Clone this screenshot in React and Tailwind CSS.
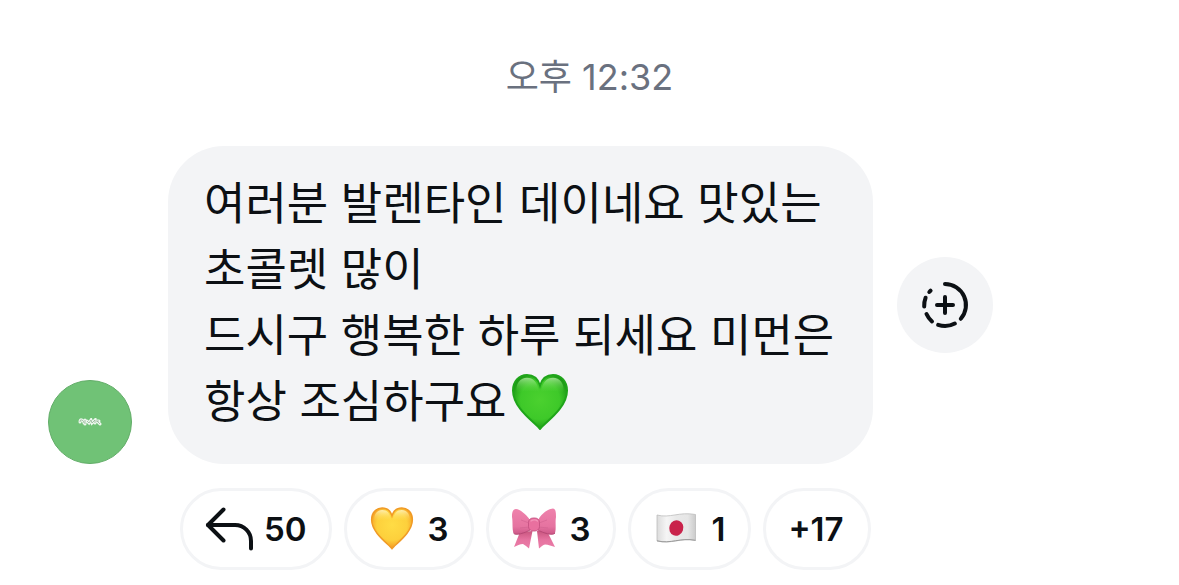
import React from 'react';

// ─── Data ────────────────────────────────────────────────────────────────────
const MESSAGE_LINES = [
  '여러분 발렌타인 데이네요 맛있는',
  '초콜렛 많이',
  '드시구 행복한 하루 되세요 미먼은',
];
const LAST_LINE = '항상 조심하구요';

// ─── Icons ───────────────────────────────────────────────────────────────────
const HEART_PATH =
  'M29 57 C25 51 1 36 1 17 C1 8 7 1 15.500 1 C22 1 27 5 29 12 C31 5 36 1 42.500 1 C51 1 57 8 57 17 C57 36 33 51 29 57 Z';

function GreenHeart() {
  return (
    <svg viewBox="0 0 58 58" className="h-14 w-14 shrink-0" role="img" aria-label="초록 하트">
      <defs>
        <radialGradient id="greenFill" cx="50%" cy="46%" r="60%">
          <stop offset="0" stopColor="#4bd12f" />
          <stop offset="0.6" stopColor="#3ec929" />
          <stop offset="1" stopColor="#128a10" />
        </radialGradient>
        <linearGradient id="greenShine" x1="0" y1="0" x2="0" y2="1">
          <stop offset="0" stopColor="#b9efaa" stopOpacity="0.75" />
          <stop offset="1" stopColor="#4bd12f" stopOpacity="0" />
        </linearGradient>
      </defs>
      <path d={HEART_PATH} fill="url(#greenFill)" />
      <path d="M5 20C3 10 9 4 15.500 4C22 4 26 8 28 18C20 17 12 17 5 20Z" fill="url(#greenShine)" />
      <path d="M53 20C55 10 49 4 42.500 4C36 4 32 8 30 18C38 17 46 17 53 20Z" fill="url(#greenShine)" />
      <path d={HEART_PATH} fill="none" stroke="#1fa51a" strokeWidth="2" />
    </svg>
  );
}

function YellowHeart() {
  return (
    <svg viewBox="-4 -3 66 66" className="h-12 w-12 shrink-0" role="img" aria-label="노란 하트">
      <defs>
        <radialGradient id="yellowFill" cx="50%" cy="42%" r="62%">
          <stop offset="0" stopColor="#ffdc45" />
          <stop offset="0.6" stopColor="#fdd03c" />
          <stop offset="1" stopColor="#f28c1b" />
        </radialGradient>
        <linearGradient id="yellowShine" x1="0" y1="0" x2="0" y2="1">
          <stop offset="0" stopColor="#fff6c2" stopOpacity="0.85" />
          <stop offset="1" stopColor="#ffdc45" stopOpacity="0" />
        </linearGradient>
      </defs>
      <path d={HEART_PATH} fill="url(#yellowFill)" />
      <path d="M5 20C3 10 9 4 15.500 4C22 4 26 8 28 18C20 17 12 17 5 20Z" fill="url(#yellowShine)" />
      <path d="M53 20C55 10 49 4 42.500 4C36 4 32 8 30 18C38 17 46 17 53 20Z" fill="url(#yellowShine)" />
      <path d={HEART_PATH} fill="none" stroke="#f09a25" strokeWidth="2" />
    </svg>
  );
}

function Ribbon() {
  return (
    <svg viewBox="0 0 48 48" className="h-12 w-12 shrink-0" role="img" aria-label="리본">
      <defs>
        <linearGradient id="loop" x1="0" y1="0" x2="0" y2="1">
          <stop offset="0" stopColor="#ef82ac" />
          <stop offset="0.7" stopColor="#e573a0" />
          <stop offset="1" stopColor="#cc5787" />
        </linearGradient>
        <linearGradient id="tail" x1="0" y1="0" x2="0" y2="1">
          <stop offset="0" stopColor="#c9557f" />
          <stop offset="0.5" stopColor="#e673a0" />
          <stop offset="1" stopColor="#ea7da8" />
        </linearGradient>
      </defs>
      <path d="M10 27L4 42C7 40.500 10 39 13 39C15 40 17 42 19 43.500L22.500 26Z" fill="url(#tail)" />
      <path d="M27 26L29 43.500C31 42 33 39.500 35 39.500C38 39.500 42 41 45 42L37 26Z" fill="url(#tail)" />
      <path d="M20 15C16 9 10 4.500 6 4C2.500 4 2 8 2 12C3 17 2 24 3.500 28C5 31 15 28 20 25Z" fill="url(#loop)" />
      <path d="M28 15C32 8 38 4 43 3.500C46 4 46 8 46 12C45 17 46.500 24 45 28C43 31 33 28 28 25Z" fill="url(#loop)" />
      <path d="M3.500 28C5 31 15 28 20 25M45 28C43 31 33 28 28 25" stroke="#b84976" strokeWidth="1" fill="none" />
      <path d="M19 18L11 15M19 22L10 23M29 18L37 15M29 22L38 23" stroke="#d0608f" strokeOpacity="0.6" strokeWidth="1" fill="none" />
      <rect x="18.500" y="13" width="11" height="13" rx="4.500" fill="#e9709f" stroke="#c04c7c" strokeWidth="0.8" />
      <path d="M21 16C23 14.800 26 14.800 27.500 16" stroke="#f394b9" strokeWidth="1.4" fill="none" strokeLinecap="round" />
    </svg>
  );
}

function JapanFlag() {
  return (
    <svg viewBox="0 0 48 48" className="h-12 w-12 shrink-0" role="img" aria-label="일본 국기">
      <defs>
        <linearGradient id="cloth" x1="0" y1="0" x2="1" y2="0">
          <stop offset="0" stopColor="#dcdcdc" />
          <stop offset="0.25" stopColor="#f5f5f5" />
          <stop offset="0.5" stopColor="#e9e9e9" />
          <stop offset="0.8" stopColor="#e6e6e6" />
          <stop offset="1" stopColor="#cbcbcb" />
        </linearGradient>
      </defs>
      <path
        d="M5 10C18 13.500 27 6.500 43.500 9.500V35.500C28 32.500 19 39.500 5 36Z"
        fill="url(#cloth)"
        stroke="#bdbdbd"
        strokeWidth="0.8"
      />
      <path d="M5 35.800C19 39.300 28 32.300 43.500 35.300" fill="none" stroke="#9b9b9b" strokeWidth="1" />
      <ellipse cx="24.300" cy="23" rx="7" ry="7.800" transform="rotate(20 24.300 23)" fill="#c9234b" />
    </svg>
  );
}

function ReplyIcon() {
  return (
    <svg viewBox="0 0 48 48" className="h-12 w-12 shrink-0 overflow-visible" fill="none" stroke="#0c1014" strokeWidth="4" strokeLinecap="round" strokeLinejoin="round" aria-hidden="true">
      <path d="M19.500 4.500L4 20L19.500 35.500" />
      <path d="M4 20H31C40 20 47 27 47 36V43.500" />
    </svg>
  );
}

function AddReactionIcon() {
  return (
    <svg viewBox="0 0 48 48" className="h-12 w-12" fill="none" stroke="#0c1014" strokeWidth="4" strokeLinecap="round" aria-hidden="true">
      <path d="M24 3A21 21 0 0 1 39.800 37.800" />
      <path d="M33.800 42.600A21 21 0 0 1 17.200 43.900" />
      <path d="M11 40.400A21 21 0 0 1 5.500 33" />
      <path d="M3.200 25.500A21 21 0 0 1 4.600 16.700" />
      <path d="M8.300 11L9.600 9.600" />
      <path d="M24 16V32M16 24H32" />
    </svg>
  );
}

// ─── Reaction pill ───────────────────────────────────────────────────────────
function Pill({ icon, children }) {
  return (
    <button
      type="button"
      className="flex h-[82px] min-w-[108px] items-center justify-center gap-3 rounded-full border-3 border-[#f3f4f6] bg-white pr-[22px] pl-[21px] text-[33px] leading-10 font-semibold"
    >
      {icon}
      <span>{children}</span>
    </button>
  );
}

function App() {
  return (
    <main className="min-h-screen bg-white px-12 pt-[50px] pb-4 font-[Inter,'Noto_Sans_CJK_KR',sans-serif] text-[#0c1014]">
      <time className="block text-center text-[36px] leading-[54px] text-[#6a717f]">오후 12:32</time>

      {/* Message row */}
      <div className="mt-[42px] flex items-end gap-9">
        <div className="flex h-[84px] w-[84px] shrink-0 items-center justify-center rounded-full border border-[#62ad68] bg-[#70c276]">
          <svg viewBox="0 0 24 8" className="h-2 w-6" fill="none" aria-hidden="true">
            <path d="M2 4Q2 1 4 2T6 5M7 2V6M9 3L11 5L13 2L14 5L17 2V5M18 3H21M19 3L22 6" stroke="#edf7ee" strokeWidth="3" strokeLinecap="round" />
            <path d="M2 4Q2 1 4 2T6 5M7 2V6M9 3L11 5L13 2L14 5L17 2V5M18 3H21M19 3L22 6" stroke="#86ae89" strokeWidth="0.700" />
          </svg>
        </div>

        <div className="flex items-center gap-6">
          <p className="rounded-[56px] bg-[#f3f4f6] pt-[25px] pr-[39px] pb-[29px] pl-9 text-[45px] leading-[66px] whitespace-nowrap">
            {MESSAGE_LINES.map((line) => (
              <span key={line} className="block">{line}</span>
            ))}
            <span className="flex items-center gap-[6px]">
              {LAST_LINE}
              <GreenHeart />
            </span>
          </p>
          <button
            type="button"
            aria-label="공감 추가"
            className="flex h-24 w-24 shrink-0 items-center justify-center rounded-full bg-[#f3f4f6]"
          >
            <AddReactionIcon />
          </button>
        </div>
      </div>

      {/* Reactions */}
      <div className="mt-6 ml-[132px] flex gap-3">
        <Pill icon={<ReplyIcon />}>50</Pill>
        <Pill icon={<YellowHeart />}>3</Pill>
        <Pill icon={<Ribbon />}>3</Pill>
        <Pill icon={<JapanFlag />}>1</Pill>
        <Pill>+17</Pill>
      </div>
    </main>
  );
}

export default App;
